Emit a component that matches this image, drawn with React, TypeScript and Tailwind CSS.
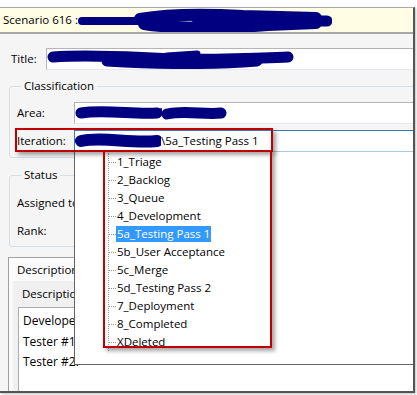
import React from "react";

const font = { fontFamily: '"Open Sans", "Noto Sans", sans-serif' };

const items = [
  "1_Triage",
  "2_Backlog",
  "3_Queue",
  "4_Development",
  "5a_Testing Pass 1",
  "5b_User Acceptance",
  "5c_Merge",
  "5d_Testing Pass 2",
  "7_Deployment",
  "8_Completed",
  "XDeleted",
];

function Scribble({ w, h, paths }: { w: number; h: number; paths: [string, number][] }) {
  return (
    <svg width={w} height={h} viewBox={`0 0 ${w} ${h}`} className="block shrink-0">
      {paths.map(([d, sw], i) => (
        <path key={i} d={d} fill="none" stroke="#000080" strokeWidth={sw} strokeLinecap="round" strokeLinejoin="round" />
      ))}
    </svg>
  );
}

export default function App() {
  return (
    <div className="w-[417px] h-[395px] bg-white overflow-hidden text-[11.5px] text-black" style={font}>
      <div className="mt-[7px] w-[415px] h-[386px] border-t border-t-[#a9a9a9] border-r-2 border-r-[#555] border-b-2 border-b-[#555] bg-[#f5f5f5] relative overflow-hidden flex flex-col shadow-[1px_1px_2px_rgba(0,0,0,0.25)]">
        {/* header */}
        <div className="h-[26px] shrink-0 bg-[#fffde4] border-b-2 border-[#a8a8a8] flex items-center pl-[3px]">
          <span className="leading-[16px] whitespace-nowrap">Scenario 616 :</span>
          <Scribble
            w={254}
            h={24}
            paths={[
              ["M4 13 L62 13", 8],
              ["M62 11 C90 6 130 6 165 8 L238 10", 12],
              ["M66 16 C100 21 140 21 190 17 L238 15", 12],
              ["M120 12 L230 12", 12],
              ["M240 13 L249 13", 11],
            ]}
          />
        </div>

        {/* title */}
        <div className="mt-[14px] flex items-center h-[22px] shrink-0">
          <span className="w-[46px] pl-[11px] leading-[16px]">Title:</span>
          <div className="flex-1 h-[22px] bg-white border border-[#b5b5b5] border-b-[#e3e9ef] border-r-0 flex items-center">
            <Scribble
              w={252}
              h={20}
              paths={[
                ["M6 8 C50 5 90 9 130 10 S190 10 241 8", 11],
                ["M60 12 C110 15 160 16 210 12", 11],
                ["M120 7 L150 5", 7],
              ]}
            />
          </div>
        </div>

        {/* classification */}
        <fieldset className="mt-[8px] ml-[9px] mr-[-8px] border border-[#d5dfe5] rounded-[3px] pl-[7px] pb-[5px]">
          <legend className="ml-[4px] px-[3px] leading-[16px]">Classification</legend>
          <div className="mt-[8px] flex items-center h-[22px]">
            <span className="w-[57px] leading-[16px]">Area:</span>
            <div className="flex-1 h-[22px] bg-white border border-[#b5b5b5] border-b-[#e3e9ef] border-r-0 flex items-center">
              <Scribble
                w={152}
                h={20}
                paths={[
                  ["M6 10 C30 6 60 12 82 10", 11],
                  ["M86 6 L84 14", 2],
                  ["M92 11 C110 7 130 12 146 10", 11],
                ]}
              />
            </div>
          </div>
          <div className="mt-[6px] flex items-center h-[22px]">
            <span className="w-[57px] leading-[16px]">Iteration:</span>
            <div className="flex-1 h-[22px] bg-white border border-[#3d7bad] border-b-[#a9cbe6] border-r-0 flex items-center">
              <Scribble w={86} h={20} paths={[["M6 10 C28 5 55 13 82 10", 12]]} />
              <span className="leading-[16px] whitespace-nowrap">\5a_Testing Pass 1</span>
            </div>
          </div>
        </fieldset>

        {/* status */}
        <fieldset className="mt-[9px] ml-[9px] mr-[-8px] border border-[#d5dfe5] rounded-[3px] pl-[7px] pb-[4px]">
          <legend className="ml-[4px] px-[3px] leading-[16px]">Status</legend>
          <div className="mt-[9px] flex items-center h-[22px]">
            <span className="leading-[16px] whitespace-nowrap">Assigned to:</span>
          </div>
          <div className="mt-[6px] flex items-center h-[22px]">
            <span className="leading-[16px]">Rank:</span>
          </div>
        </fieldset>

        {/* description tabs */}
        <div className="mt-[10px] ml-[8px] flex-1 border-t border-l border-[#a0a0a0] bg-[#fbfbfb] flex flex-col">
          <div className="h-[23px] shrink-0 flex items-center pl-[8px] leading-[16px]">Description</div>
          <div className="ml-[4px] flex-1 bg-[#f0f0f0] flex flex-col">
            <div className="h-[26px] shrink-0 flex items-center pl-[9px] leading-[16px]">Description</div>
            <div className="ml-[5px] flex-1 bg-white border-t border-l border-[#abadb3] pl-[4px] pt-[3px] text-[12px] leading-[20.5px]">
              <div>Developer:</div>
              <div>Tester #1:</div>
              <div>Tester #2.</div>
            </div>
          </div>
        </div>

        {/* dropdown list */}
        <div className="absolute left-[74px] top-[144px] w-[345px] h-[213px] bg-white border-l border-b border-[#646464]">
          <div className="ml-[33px] mt-[1px] border-l border-dotted border-[#9a9a9a] w-fit">
            {items.map((it) => (
              <div key={it} className="flex items-center h-[18px]">
                <span className="w-[7px] border-t border-dotted border-[#9a9a9a]" />
                <span
                  className={
                    it === "5a_Testing Pass 1"
                      ? "px-[1px] leading-[16px] bg-[#3399ff] text-white whitespace-nowrap"
                      : "px-[1px] leading-[16px] whitespace-nowrap"
                  }
                >
                  {it}
                </span>
              </div>
            ))}
          </div>
        </div>

        {/* red annotation boxes */}
        <div className="absolute left-[15px] top-[120px] w-[258px] h-[24px] border-2 border-[#c00000] shadow-[3px_3px_4px_rgba(0,0,0,0.35)]" />
        <div className="absolute left-[103px] top-[142px] w-[169px] h-[198px] border-2 border-[#c00000] shadow-[3px_3px_4px_rgba(0,0,0,0.35)]" />
      </div>
    </div>
  );
}
